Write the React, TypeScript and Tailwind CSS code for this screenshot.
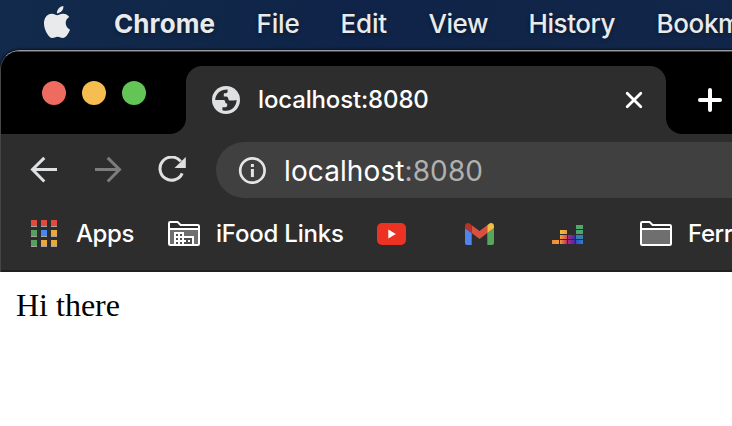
import type { ReactNode } from "react";
import { SiApple } from "react-icons/si";

function MenuBar() {
  return (
    <header className="flex h-[50px] w-[1000px] items-center bg-gradient-to-r from-[#122a4c] via-[#0f2448] via-35% to-[#122747] pb-[2px] text-[26px] leading-[46px] font-medium text-[#e9eaec] [text-shadow:0_1px_4px_rgba(0,0,0,0.4)]">
      <span className="w-[114px] shrink-0 pb-1 pl-[41px]">
        <SiApple size={32} />
      </span>
      <span className="w-[142.6px] shrink-0 font-bold tracking-[0.1px]">Chrome</span>
      <span className="w-[84px] shrink-0 tracking-[-0.2px]">File</span>
      <span className="w-[88px] shrink-0 tracking-[-0.2px]">Edit</span>
      <span className="w-[100px] shrink-0 tracking-[-0.5px]">View</span>
      <span className="w-[128px] shrink-0 tracking-[-0.45px]">History</span>
      <span className="shrink-0 tracking-[-0.4px]">Bookm</span>
    </header>
  );
}

function Globe() {
  return (
    <svg width="28" height="28" viewBox="0 0 28 28" className="shrink-0">
      <circle cx="14" cy="14" r="14" fill="#dfe0e1" />
      <path
        fill="#2d2d2d"
        d="M3.2 14C3.4 8 8 3.5 15.6 3.4v2.1c0 1-.8 1.7-1.8 1.7h-1.2c-.6 0-.8.5-.8 1v2.2h2.3c1.5 0 2.2 1 2.2 2.3 0 1.2.9 1.9 2.2 1.9h3c.9 0 1.6-.4 3.1-.6-.1 6-4.6 10.8-10.6 10.8-1.3 0-2.5-.2-3.6-.6v-2.9h2.5c1.4 0 2.3-.8 2.3-2.1v-1.6c-1.4-.1-2.1-.9-2.1-2.1 0-1-.7-1.5-1.8-1.5z"
      />
    </svg>
  );
}

function TabStrip() {
  return (
    <div className="flex h-[82px] items-end bg-black">
      <div className="flex h-full w-[185px] shrink-0 bg-[#2d2d2d]">
        <div className="flex h-full w-full gap-4 rounded-br-[16px] bg-black pt-[29px] pl-[41px]">
          <span className="size-6 rounded-full bg-[#ed6b5f]" />
          <span className="size-6 rounded-full bg-[#f6be50]" />
          <span className="size-6 rounded-full bg-[#62c555]" />
        </div>
      </div>
      <div className="h-full w-[480px] shrink-0 bg-black pt-[14px]">
        <div className="flex h-[68px] items-center rounded-t-[16px] bg-[#2d2d2d] pl-[26px]">
          <Globe />
          <span className="ml-[18px] w-[367px] text-[24px] leading-[28px] font-medium tracking-[-0.15px] text-white">
            localhost:8080
          </span>
          <svg width="18" height="18" viewBox="0 0 18 18" stroke="#fff" strokeWidth="2.8" strokeLinecap="round">
            <path d="M2.2 2.2l13.6 13.6M15.8 2.2L2.2 15.8" />
          </svg>
        </div>
      </div>
      <div className="h-full w-[66px] shrink-0 bg-[#2d2d2d]">
        <div className="h-full w-full rounded-bl-[16px] bg-black pt-[36px] pl-[32px]">
          <svg width="24" height="24" viewBox="0 0 24 24" stroke="#fff" strokeWidth="4" strokeLinecap="round">
            <path d="M2 12h20M12 2v20" />
          </svg>
        </div>
      </div>
    </div>
  );
}

function Toolbar() {
  return (
    <div className="flex h-[64px] items-center pt-2 pl-[29px]">
      <svg width="28" height="28" viewBox="0 0 28 28" fill="none" stroke="#dfe0e1" strokeWidth="3" className="mr-9 shrink-0">
        <path d="M27 13.5H3M14.3 1.9L2.5 13.5l11.8 12" />
      </svg>
      <svg width="28" height="28" viewBox="0 0 28 28" fill="none" stroke="#7d7d7d" strokeWidth="3" className="mr-9 shrink-0">
        <path d="M1 13.5h24M13.7 1.9l11.8 11.6-11.8 12" />
      </svg>
      <svg width="28" height="28" viewBox="0 0 28 28" className="mr-[30px] shrink-0">
        <path d="M22.7 5.4A11.6 11.6 0 1 0 24.2 17.4" fill="none" stroke="#dfe0e1" strokeWidth="3" />
        <path d="M27.8 1v11H16.5z" fill="#dfe0e1" />
      </svg>
      <div className="flex h-14 grow items-center rounded-l-full bg-[#404040] pl-[22px]">
        <svg width="28" height="28" viewBox="0 0 28 28" className="shrink-0">
          <circle cx="14.4" cy="14.5" r="12.2" fill="none" stroke="#e4e5e6" strokeWidth="2.7" />
          <path d="M12.9 8h3v3h-3zM12.9 13h3v8h-3z" fill="#e4e5e6" />
        </svg>
        <span className="ml-[18px] pt-px text-[28px] leading-[34px] tracking-[0.1px] text-[#b0b0b0]">
          <span className="text-white">localhost</span>:8080
        </span>
      </div>
    </div>
  );
}

function AppsIcon() {
  const colors = [
    "#e04a3f", "#e04a3f", "#e04a3f",
    "#57a05f", "#4688f1", "#e9a83a",
    "#57a05f", "#e9a83a", "#e9a83a",
  ];
  return (
    <svg width="27" height="27" viewBox="0 0 27 27" className="mb-px shrink-0">
      {colors.map((color, i) => {
        const x = (i % 3) * 10;
        const y = Math.floor(i / 3) * 10;
        return (
          <g key={i}>
            <rect x={x} y={y} width="6" height="6" fill={color} />
            <rect x={x} y={y + 6} width="6" height="1" fill="#a5a2a4" />
          </g>
        );
      })}
    </svg>
  );
}

function Folder({ children }: { children?: ReactNode }) {
  return (
    <svg width="32" height="26" viewBox="0 0 32 26" className="shrink-0">
      <path d="M1 8h30v16H1z" fill="#6f6f6f" />
      <path
        d="M1 2.3Q1 1 2.3 1H9.6L12.6 4H29.7Q31 4 31 5.3V22.7Q31 24 29.7 24H2.3Q1 24 1 22.7ZM1 8H31"
        fill="none"
        stroke="#fff"
        strokeWidth="2"
      />
      {children}
    </svg>
  );
}

function BuildingFolder() {
  return (
    <Folder>
      <path d="M6 11h10v4h10v9H6z" fill="#fff" />
      <path
        d="M8 13h2v2H8zM12 13h2v2h-2zM8 17h2v2H8zM12 17h2v2h-2zM8 21h2v2H8zM12 21h2v2h-2zM16 17h8v6h-8z"
        fill="#4d4d4d"
      />
      <path d="M16 19h2v2h-2zM20 19h2v2h-2z" fill="#fff" />
    </Folder>
  );
}

function YouTube() {
  return (
    <svg width="29" height="22" viewBox="0 0 29 22" className="shrink-0">
      <rect width="29" height="22" rx="5" fill="#eb3223" />
      <path d="M11.3 6.5v9l7.5-4.5z" fill="#fff" />
    </svg>
  );
}

function Gmail() {
  return (
    <svg width="29" height="22" viewBox="0 0 29 22" className="shrink-0">
      <path d="M0 5l6.7 5v12H2a2 2 0 0 1-2-2z" fill="#5086ec" />
      <path d="M29 5l-6.7 5v12H27a2 2 0 0 0 2-2z" fill="#58a55c" />
      <path d="M6.7 2.2l7.8 5.9 7.8-5.9V10l-7.8 6-7.8-6z" fill="#d85140" />
      <path d="M0 3.2C0 .4 3-1 5.2.9l1.5 1.3V10L0 5z" fill="#b5342a" />
      <path d="M29 3.2C29 .4 26-1 23.8.9l-1.5 1.3V10L29 5z" fill="#f2be42" />
    </svg>
  );
}

function Deezer() {
  return (
    <svg width="31" height="19" viewBox="0 0 31 19" className="shrink-0">
      <defs>
        <linearGradient id="col1">
          <stop stopColor="#ed8a35" />
          <stop offset="1" stopColor="#f29b3c" />
        </linearGradient>
        <linearGradient id="col2a">
          <stop stopColor="#f0bd43" />
          <stop offset="1" stopColor="#e99b40" />
        </linearGradient>
        <linearGradient id="col2b">
          <stop stopColor="#f0a23b" />
          <stop offset="1" stopColor="#d94e50" />
        </linearGradient>
        <linearGradient id="col2c">
          <stop stopColor="#f09a3b" />
          <stop offset="1" stopColor="#b92e65" />
        </linearGradient>
        <linearGradient id="col3a">
          <stop stopColor="#a72b82" />
          <stop offset="1" stopColor="#3930a5" />
        </linearGradient>
        <linearGradient id="col3b">
          <stop stopColor="#b62977" />
          <stop offset="1" stopColor="#3e2aae" />
        </linearGradient>
        <linearGradient id="col4">
          <stop stopColor="#2d50bd" />
          <stop offset="1" stopColor="#327dd5" />
        </linearGradient>
      </defs>
      <path d="M0 15h7v4H0z" fill="url(#col1)" />
      <path d="M8 5h7v4H8z" fill="url(#col2a)" />
      <path d="M8 10h7v4H8z" fill="url(#col2b)" />
      <path d="M8 15h7v4H8z" fill="url(#col2c)" />
      <path d="M16 10h7v4h-7z" fill="url(#col3a)" />
      <path d="M16 15h7v4h-7z" fill="url(#col3b)" />
      <path d="M24 0h7v4h-7z" fill="#51a866" />
      <path d="M24 5h7v4h-7z" fill="#49a577" />
      <path d="M24 10h7v4h-7z" fill="#347fac" />
      <path d="M24 15h7v4h-7z" fill="url(#col4)" />
    </svg>
  );
}

function BookmarksBar() {
  return (
    <nav className="flex h-[74px] w-[1000px] items-center border-b-2 border-[#211e20] pl-[30px] text-[24px] leading-[30px] font-medium text-white">
      <AppsIcon />
      <span className="ml-[18px] w-[92px] shrink-0 tracking-[-0.4px]">Apps</span>
      <BuildingFolder />
      <span className="ml-[16px] w-[161px] shrink-0 tracking-[-0.2px]">iFood Links</span>
      <YouTube />
      <span className="w-[59px] shrink-0" />
      <Gmail />
      <span className="w-[58px] shrink-0" />
      <span className="mr-[57px] pt-px">
        <Deezer />
      </span>
      <Folder />
      <span className="ml-[16px] shrink-0 tracking-[-0.4px]">Ferr</span>
    </nav>
  );
}

export default function App() {
  return (
    <div className="h-[426px] w-[732px] overflow-hidden bg-[#12294a] font-[Inter,sans-serif]">
      <MenuBar />
      <div className="overflow-hidden rounded-tl-[20px] border-t border-l border-t-[#9c9c9c] border-l-[#454545] bg-[#2d2d2d] shadow-[0_0_2px_1px_#09111e]">
        <div className="h-px bg-[#444]" />
        <TabStrip />
        <Toolbar />
        <BookmarksBar />
      </div>
      <main className="h-[160px] bg-white px-4 pt-[15px] font-['Liberation_Serif',serif] text-[32px] leading-[37px] text-black">
        Hi there
      </main>
    </div>
  );
}
